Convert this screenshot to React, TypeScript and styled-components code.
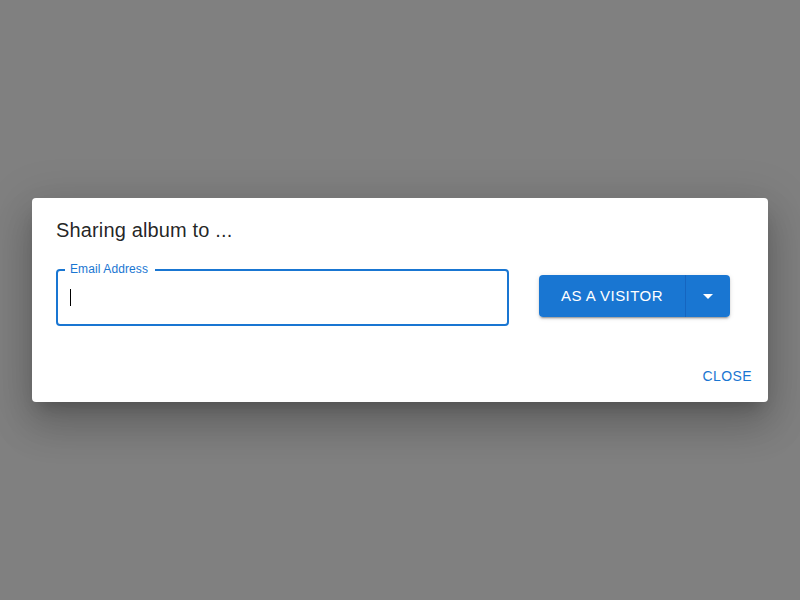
import React from "react";
import styled, { createGlobalStyle } from "styled-components";

const FONT = `"Liberation Sans", Arial, sans-serif`;

const Global = createGlobalStyle`
  html, body { margin: 0; padding: 0; }
  body { font-family: ${FONT}; background: #fff; }
  * { box-sizing: border-box; }
`;

const Backdrop = styled.div`
  width: 800px;
  height: 600px;
  background: #808080;
  display: flex;
  align-items: center;
  justify-content: center;
`;

const Dialog = styled.div`
  width: 736px;
  background: #fff;
  border-radius: 4px;
  box-shadow: 0px 11px 15px -7px rgba(0,0,0,0.2), 0px 24px 38px 3px rgba(0,0,0,0.14), 0px 9px 46px 8px rgba(0,0,0,0.12);
  display: flex;
  flex-direction: column;
`;

const Title = styled.h2`
  margin: 0;
  padding: 16px 24px;
  font-size: 20px;
  font-weight: 400;
  line-height: 32px;
  letter-spacing: 0.15px;
  color: rgba(0,0,0,0.87);
  font-family: ${FONT};
`;

const Content = styled.div`
  padding: 8px 24px 24px;
  display: flex;
  align-items: flex-start;
`;

const Field = styled.div`
  position: relative;
  flex: 1;
  height: 56px;
`;

const Outline = styled.fieldset`
  position: absolute;
  inset: -7px 0 0 0;
  margin: 0;
  padding: 0 7px;
  border: 2px solid #1976d2;
  border-radius: 4px;
  pointer-events: none;
`;

const Legend = styled.legend`
  padding: 0 7px 0 5px;
  font-size: 12px;
  line-height: 13px;
  color: #1976d2;
  font-family: ${FONT};
  letter-spacing: 0.1px;
`;

const Input = styled.input`
  width: 100%;
  height: 56px;
  border: none;
  outline: none;
  background: transparent;
  padding: 16.5px 14px;
  font-size: 16px;
  font-family: ${FONT};
  color: rgba(0,0,0,0.87);
  caret-color: transparent;
`;

const Caret = styled.span`
  position: absolute;
  left: 14px;
  top: 19px;
  width: 1px;
  height: 17px;
  background: #000;
`;

const Group = styled.div`
  display: flex;
  margin: 5px 14px 0 30px;
  border-radius: 4px;
  box-shadow: 0px 3px 1px -2px rgba(0,0,0,0.2), 0px 2px 2px 0px rgba(0,0,0,0.14), 0px 1px 5px 0px rgba(0,0,0,0.12);
  overflow: hidden;
`;

const GroupButton = styled.button<{ $divider?: boolean; $w?: number }>`
  height: 42px;
  border: none;
  background: #1976d2;
  color: #fff;
  font-family: ${FONT};
  font-size: 15px;
  font-weight: 400;
  letter-spacing: 0.46px;
  text-transform: uppercase;
  padding: 0 22px 2px;
  display: flex;
  align-items: center;
  justify-content: center;
  cursor: pointer;
  ${(p) => (p.$w ? `width: ${p.$w}px; padding: 0;` : "")}
  ${(p) => (p.$divider ? "border-right: 1px solid #1565c0;" : "")}
`;

const Actions = styled.div`
  padding: 8px;
  display: flex;
  justify-content: flex-end;
`;

const TextButton = styled.button`
  height: 36px;
  padding: 6px 8px;
  border: none;
  background: transparent;
  color: #1976d2;
  font-family: ${FONT};
  font-size: 14px;
  font-weight: 400;
  letter-spacing: 0.4px;
  text-transform: uppercase;
  border-radius: 4px;
  cursor: pointer;
`;

export default function App() {
  return (
    <>
      <Global />
      <Backdrop>
        <Dialog>
          <Title>Sharing album to ...</Title>
          <Content>
            <Field>
              <Input aria-label="Email Address" />
              <Caret />
              <Outline>
                <Legend>Email Address</Legend>
              </Outline>
            </Field>
            <Group>
              <GroupButton $divider>As a visitor</GroupButton>
              <GroupButton $w={44} aria-label="select option">
                <svg width="24" height="24" viewBox="0 0 24 24" fill="#fff">
                  <path d="M7 10l5 5 5-5z" />
                </svg>
              </GroupButton>
            </Group>
          </Content>
          <Actions>
            <TextButton>Close</TextButton>
          </Actions>
        </Dialog>
      </Backdrop>
    </>
  );
}
